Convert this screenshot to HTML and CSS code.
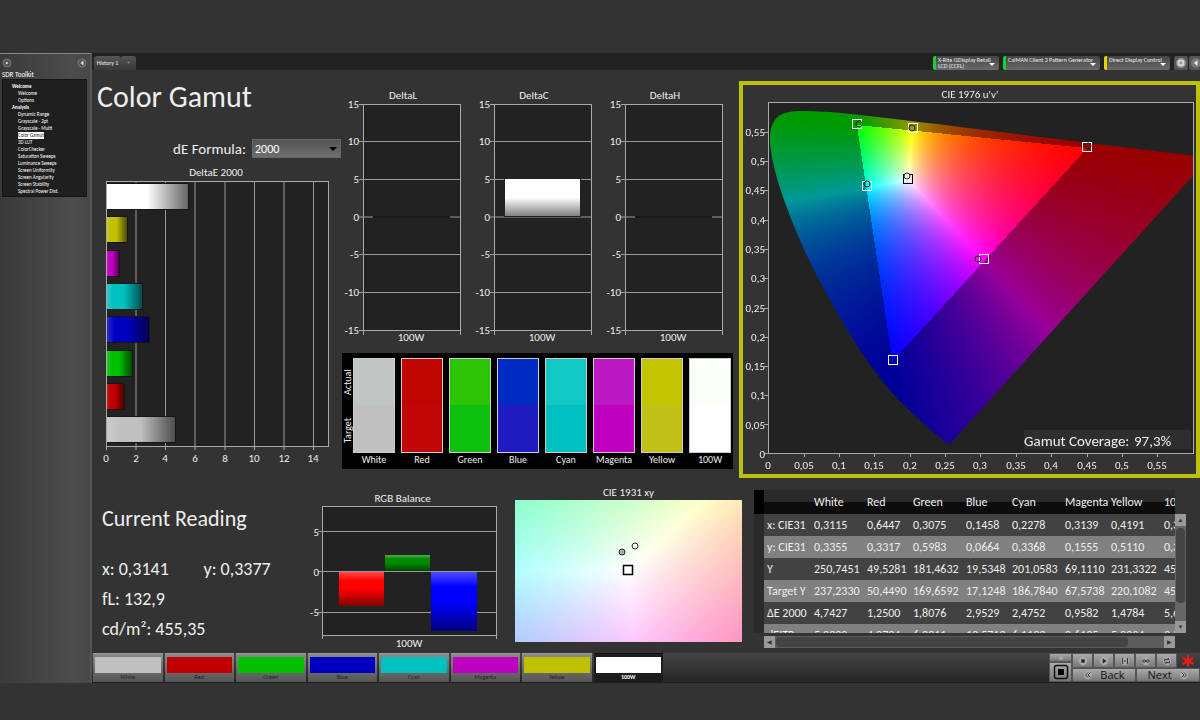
FILE: index.html
```html
<!DOCTYPE html>
<html lang="en">
<head>
    <meta charset="UTF-8">
    <meta name="viewport" content="width=device-width, initial-scale=1.0">
    <title>Color Gamut</title>
    <link rel="stylesheet" href="styles.css">
</head>
<body>
    <div class="app">
        <aside class="sidebar">
            <div class="sidebar-head">
                <button class="dot" aria-label="Menu"><svg viewBox="0 0 10 10"><circle cx="5" cy="5" r="4"/><path d="M4 3.500v3L6.500 5z"/></svg></button>
                <button class="dot" aria-label="Collapse"><svg viewBox="0 0 10 10"><circle cx="5" cy="5" r="4"/><path d="M6.500 2.500v5L3.500 5z"/></svg></button>
            </div>
            <p class="sidebar-title">SDR Toolkit</p>
            <nav class="tree">
                <b>Welcome</b>
                <a href="#">Welcome</a>
                <a href="#">Options</a>
                <b>Analysis</b>
                <a href="#">Dynamic Range</a>
                <a href="#">Grayscale - 2pt</a>
                <a href="#">Grayscale - Multi</a>
                <a href="#" class="current">Color Gamut</a>
                <a href="#">3D LUT</a>
                <a href="#">ColorChecker</a>
                <a href="#">Saturation Sweeps</a>
                <a href="#">Luminance Sweeps</a>
                <a href="#">Screen Uniformity</a>
                <a href="#">Screen Angularity</a>
                <a href="#">Screen Stability</a>
                <a href="#">Spectral Power Dist.</a>
            </nav>
        </aside>

        <main class="main">
            <header class="topbar">
                <div class="tabs">
                    <button class="tab">History 1</button>
                    <button class="tab add">+</button>
                </div>
                <div class="devices">
                    <button class="device meter"><span>X-Rite i1Display Retail<br>LCD (CCFL)</span></button>
                    <button class="device source"><span>CalMAN Client 3 Pattern Generator</span></button>
                    <button class="device display"><span>Direct Display Control</span></button>
                    <button class="round" aria-label="Settings"><svg viewBox="0 0 14 14"><circle cx="7" cy="7" r="5" fill="#999"/><circle cx="7" cy="7" r="2.500" fill="none" stroke="#ddd" stroke-width="1.500"/></svg></button>
                    <button class="round" aria-label="Hide"><svg viewBox="0 0 14 14"><circle cx="7" cy="7" r="5" fill="#777"/><path d="M8.500 4v6L5 7z" fill="#eee"/></svg></button>
                </div>
            </header>

            <div class="row upper">
                <section class="delta-e">
                    <h1>Color Gamut</h1>
                    <div class="formula">
                        <label for="formula">dE Formula:</label>
                        <select id="formula"><option>2000</option><option>1994</option><option>1976</option></select>
                    </div>
                    <figure>
                        <figcaption>DeltaE 2000</figcaption>
                        <svg viewBox="0 0 248 288" class="chart">
                            <defs>
                                <linearGradient id="shadeX">
                                    <stop offset="0" stop-color="#fff" stop-opacity=".2"/>
                                    <stop offset=".2" stop-color="#fff" stop-opacity="0"/>
                                    <stop offset=".5" stop-opacity="0"/>
                                    <stop offset="1" stop-opacity=".6"/>
                                </linearGradient>
                                <linearGradient id="shadeY" x2="0" y2="1">
                                    <stop offset="0" stop-color="#fff" stop-opacity=".3"/>
                                    <stop offset=".25" stop-color="#fff" stop-opacity="0"/>
                                    <stop offset=".5" stop-opacity="0"/>
                                    <stop offset="1" stop-opacity=".5"/>
                                </linearGradient>
                            </defs>
                            <rect class="plot" x="14.500" y="1.500" width="222" height="265"/>
                            <path class="grid" d="M44 1v265M73.500 1v265M103 1v265M133 1v265M162.500 1v265M192 1v265M221.500 1v265"/>
                            <g id="delta-e-bars"></g>
                            <path class="axis" d="M14.500 1v269M44 266v4M73.500 266v4M103 266v4M133 266v4M162.500 266v4M192 266v4M221.500 266v4"/>
                            <g class="mid">
                                <text x="14" y="282">0</text><text x="44" y="282">2</text><text x="73" y="282">4</text><text x="103" y="282">6</text>
                                <text x="133" y="282">8</text><text x="162" y="282">10</text><text x="192" y="282">12</text><text x="221" y="282">14</text>
                            </g>
                        </svg>
                    </figure>
                </section>

                <section class="deltas">
                    <div class="delta-row">
                        <figure>
                            <figcaption>DeltaL</figcaption>
                            <svg viewBox="0 0 131 242" class="chart">
                                <rect class="plot" x="23.500" y="1.500" width="97" height="226"/>
                                <path class="grid" d="M19 38.500h101M19 76.500h101M19 151.500h101M19 189.500h101M19 114h14M110 114h10"/>
                                <path class="axis" d="M19 1.500h4M19 227.500h4M23.500 227v5M120.500 227v5"/>
                                <path class="zero" d="M33 114h77"/>
                                <g class="end"><text x="19" y="5">15</text><text x="19" y="42">10</text><text x="19" y="80">5</text><text x="19" y="118">0</text><text x="19" y="155">-5</text><text x="19" y="193">-10</text><text x="19" y="231">-15</text></g>
                                <text class="mid" x="71" y="238">100W</text>
                            </svg>
                        </figure>
                        <figure>
                            <figcaption>DeltaC</figcaption>
                            <svg viewBox="0 0 131 242" class="chart">
                                <rect class="plot" x="23.500" y="1.500" width="97" height="226"/>
                                <path class="grid" d="M19 38.500h101M19 76.500h101M19 151.500h101M19 189.500h101M19 114h101"/>
                                <path class="axis" d="M19 1.500h4M19 227.500h4M23.500 227v5M120.500 227v5"/>
                                <rect x="33" y="76" width="77" height="38" fill="#222"/>
                                <rect x="34" y="76" width="75" height="37" fill="#fff"/>
                                <rect x="34" y="76" width="75" height="37" fill="url(#shadeY)"/>
                                <g class="end"><text x="19" y="5">15</text><text x="19" y="42">10</text><text x="19" y="80">5</text><text x="19" y="118">0</text><text x="19" y="155">-5</text><text x="19" y="193">-10</text><text x="19" y="231">-15</text></g>
                                <text class="mid" x="71" y="238">100W</text>
                            </svg>
                        </figure>
                        <figure>
                            <figcaption>DeltaH</figcaption>
                            <svg viewBox="0 0 131 242" class="chart">
                                <rect class="plot" x="23.500" y="1.500" width="97" height="226"/>
                                <path class="grid" d="M19 38.500h101M19 76.500h101M19 151.500h101M19 189.500h101M19 114h14M110 114h10"/>
                                <path class="axis" d="M19 1.500h4M19 227.500h4M23.500 227v5M120.500 227v5"/>
                                <path class="zero" d="M33 114h77"/>
                                <g class="end"><text x="19" y="5">15</text><text x="19" y="42">10</text><text x="19" y="80">5</text><text x="19" y="118">0</text><text x="19" y="155">-5</text><text x="19" y="193">-10</text><text x="19" y="231">-15</text></g>
                                <text class="mid" x="71" y="238">100W</text>
                            </svg>
                        </figure>
                    </div>

                    <div class="swatches">
                        <div class="side"><span>Actual</span><span>Target</span></div>
                        <div class="swatch white"><i></i>White</div>
                        <div class="swatch red"><i></i>Red</div>
                        <div class="swatch green"><i></i>Green</div>
                        <div class="swatch blue"><i></i>Blue</div>
                        <div class="swatch cyan"><i></i>Cyan</div>
                        <div class="swatch magenta"><i></i>Magenta</div>
                        <div class="swatch yellow"><i></i>Yellow</div>
                        <div class="swatch w100"><i></i>100W</div>
                    </div>
                </section>

                <section class="gamut">
                    <div class="gamut-frame">
                        <canvas id="uv" width="453" height="389"></canvas>
                        <svg viewBox="0 0 453 389" class="chart">
                            <text class="mid" x="227" y="13">CIE 1976 u'v'</text>
                            <rect class="axis" x="25.500" y="17.500" width="425" height="351"/>
                            <path class="axis" d="M21 47.500h4M21 76.500h4M21 105.500h4M21 135.500h4M21 164.500h4M21 193.500h4M21 223.500h4M21 252.500h4M21 281.500h4M21 310.500h4M21 339.500h4M21 368.500h4M61.500 368v4M96.500 368v4M131.500 368v4M167.500 368v4M202.500 368v4M237.500 368v4M273.500 368v4M308.500 368v4M344.500 368v4M379.500 368v4M414.500 368v4"/>
                            <g class="end">
                                <text x="22" y="51">0,55</text><text x="22" y="80">0,5</text><text x="22" y="109">0,45</text><text x="22" y="139">0,4</text>
                                <text x="22" y="168">0,35</text><text x="22" y="197">0,3</text><text x="22" y="227">0,25</text><text x="22" y="256">0,2</text>
                                <text x="22" y="285">0,15</text><text x="22" y="314">0,1</text><text x="22" y="344">0,05</text><text x="22" y="373">0</text>
                            </g>
                            <g class="mid">
                                <text x="25" y="384">0</text><text x="61" y="384">0,05</text><text x="96" y="384">0,1</text><text x="131" y="384">0,15</text>
                                <text x="167" y="384">0,2</text><text x="202" y="384">0,25</text><text x="237" y="384">0,3</text><text x="273" y="384">0,35</text>
                                <text x="308" y="384">0,4</text><text x="344" y="384">0,45</text><text x="379" y="384">0,5</text><text x="414" y="384">0,55</text>
                            </g>
                            <rect x="281" y="345" width="167" height="19" fill="#2e2e2e"/>
                            <text class="coverage" x="281" y="361">Gamut Coverage:</text>
                            <text class="coverage" x="391" y="361">97,3%</text>
                            <g class="target">
                                <rect x="109.500" y="34.500" width="9" height="9"/><rect x="165.500" y="38.500" width="9" height="9"/>
                                <rect x="339.500" y="57.500" width="9" height="9"/><rect x="119.500" y="96.500" width="9" height="9"/>
                                <rect x="236.500" y="169.500" width="9" height="9"/><rect x="145.500" y="270.500" width="9" height="9"/>
                                <rect x="160.500" y="89.500" width="9" height="9" stroke="#000"/>
                            </g>
                            <g class="actual">
                                <circle cx="116" cy="39" r="3"/><circle cx="169" cy="43" r="3"/><circle cx="345" cy="61" r="3"/>
                                <circle cx="124" cy="99" r="3"/><circle cx="164" cy="91" r="3" fill="#eee"/><circle cx="235" cy="174" r="3"/>
                            </g>
                        </svg>
                    </div>
                </section>
            </div>

            <div class="row lower">
                <section class="reading">
                    <h2>Current Reading</h2>
                    <p><span>x: 0,3141</span><span>y: 0,3377</span></p>
                    <p>fL: 132,9</p>
                    <p>cd/m²: 455,35</p>
                </section>

                <figure class="balance">
                    <figcaption>RGB Balance</figcaption>
                    <svg viewBox="0 0 200 146" class="chart">
                        <rect class="plot" x="17.500" y=".5" width="174" height="129"/>
                        <path class="grid" d="M13 25.500h178M13 65.500h178M13 106.500h178"/>
                        <path class="axis" d="M17.500 129v4M191.500 129v4"/>
                        <rect x="34" y="66" width="45" height="34" fill="#f00"/><rect x="34" y="66" width="45" height="34" fill="url(#shadeY)"/>
                        <rect x="80" y="49" width="45" height="16" fill="#008a00"/><rect x="80" y="49" width="45" height="16" fill="url(#shadeY)"/>
                        <rect x="126" y="66" width="46" height="59" fill="#00f"/><rect x="126" y="66" width="46" height="59" fill="url(#shadeY)"/>
                        <g class="end"><text x="14" y="30">5</text><text x="14" y="70">0</text><text x="14" y="110">-5</text></g>
                        <text class="mid" x="104" y="141">100W</text>
                    </svg>
                </figure>

                <figure class="cie">
                    <figcaption>CIE 1931 xy</figcaption>
                    <div class="cie-frame">
                        <canvas id="xy" width="227" height="142"></canvas>
                        <svg viewBox="0 0 227 142" class="chart">
                            <rect x="108.500" y="65.500" width="9" height="9" fill="#fff" stroke="#000" stroke-width="1.500"/>
                            <g class="actual"><circle cx="107" cy="52" r="3" fill="#aaa"/><circle cx="120" cy="46" r="3"/></g>
                        </svg>
                    </div>
                </figure>

                <section class="data">
                    <div class="strip"></div>
                    <div class="table-view">
                        <table>
                            <thead>
                                <tr><th class="name"></th><th>White</th><th class="s">Red</th><th>Green</th><th class="s">Blue</th><th>Cyan</th><th class="s">Magenta</th><th>Yellow</th><th>100W</th></tr>
                            </thead>
                            <tbody>
                                <tr><td>x: CIE31</td><td>0,3115</td><td>0,6447</td><td>0,3075</td><td>0,1458</td><td>0,2278</td><td>0,3139</td><td>0,4191</td><td>0,3141</td></tr>
                                <tr><td>y: CIE31</td><td>0,3355</td><td>0,3317</td><td>0,5983</td><td>0,0664</td><td>0,3368</td><td>0,1555</td><td>0,5110</td><td>0,3377</td></tr>
                                <tr><td>Y</td><td>250,7451</td><td>49,5281</td><td>181,4632</td><td>19,5348</td><td>201,0583</td><td>69,1110</td><td>231,3322</td><td>455,3500</td></tr>
                                <tr><td>Target Y</td><td>237,2330</td><td>50,4490</td><td>169,6592</td><td>17,1248</td><td>186,7840</td><td>67,5738</td><td>220,1082</td><td>455,3500</td></tr>
                                <tr><td>ΔE 2000</td><td>4,7427</td><td>1,2500</td><td>1,8076</td><td>2,9529</td><td>2,4752</td><td>0,9582</td><td>1,4784</td><td>5,6000</td></tr>
                                <tr><td>dEITP</td><td>5,2220</td><td>4,0734</td><td>6,2011</td><td>12,5712</td><td>6,1193</td><td>0,6135</td><td>5,2034</td><td>3,5000</td></tr>
                            </tbody>
                        </table>
                    </div>
                    <div class="vbar"><button aria-label="Up">▲</button><i></i><button aria-label="Down">▼</button></div>
                    <div class="hbar"><button aria-label="Left">◀</button><i></i><button aria-label="Right">▶</button></div>
                </section>
            </div>

            <footer class="footer">
                <div class="patterns">
                    <button class="pattern white"><i></i>White</button>
                    <button class="pattern red"><i></i>Red</button>
                    <button class="pattern green"><i></i>Green</button>
                    <button class="pattern blue"><i></i>Blue</button>
                    <button class="pattern cyan"><i></i>Cyan</button>
                    <button class="pattern magenta"><i></i>Magenta</button>
                    <button class="pattern yellow"><i></i>Yellow</button>
                    <button class="pattern w100 active"><i></i>100W</button>
                </div>
                <div class="controls">
                    <div class="stop-col">
                        <button aria-label="Record"><svg viewBox="0 0 12 12"><circle cx="6" cy="6" r="2.500" fill="#444"/></svg></button>
                        <button aria-label="Stop"><svg viewBox="0 0 16 16"><rect x="1.500" y="1.500" width="13" height="13" rx="2" fill="none" stroke="#111" stroke-width="1.500"/><rect x="5" y="5" width="6" height="6" fill="#000"/></svg></button>
                    </div>
                    <div class="nav-col">
                        <div class="icons">
                            <button aria-label="Stop reading"><svg viewBox="0 0 12 12"><circle cx="6" cy="6" r="5"/><path d="M4 4h4v4H4z"/></svg></button>
                            <button aria-label="Play"><svg viewBox="0 0 12 12"><circle cx="6" cy="6" r="5"/><path d="M4.500 3v6L9 6z"/></svg></button>
                            <button aria-label="Step"><svg viewBox="0 0 12 12"><circle cx="6" cy="6" r="5"/><path class="ln" d="M4 3H3v6h1M8 3h1v6H8M4.500 6h3"/></svg></button>
                            <button aria-label="Loop"><svg viewBox="0 0 12 12"><circle cx="6" cy="6" r="5"/><path class="ln" d="M6 6c-1-2-4-2-4 0s3 2 4 0 4-2 4 0-3 2-4 0z"/></svg></button>
                            <button aria-label="Refresh"><svg viewBox="0 0 12 12"><circle cx="6" cy="6" r="5"/><path class="ln" d="M3 6V4h5M9 6v2H4M7 2.500L8.500 4 7 5.500M5 6.500L3.500 8 5 9.500"/></svg></button>
                            <svg class="star" viewBox="0 0 14 14"><path d="M7 1v12M1.500 4l11 6M1.500 10l11-6"/></svg>
                        </div>
                        <div class="steps">
                            <button><svg viewBox="0 0 12 12"><circle cx="6" cy="6" r="5"/><path class="ln" d="M6 3L3 6l3 3M9 3L6 6l3 3"/></svg>Back</button>
                            <button>Next<svg viewBox="0 0 12 12"><circle cx="6" cy="6" r="5"/><path class="ln" d="M3 3l3 3-3 3M6 3l3 3-3 3"/></svg></button>
                        </div>
                    </div>
                </div>
            </footer>
        </main>
    </div>
    <script src="script.js"></script>
</body>
</html>
```

FILE: styles.css
```css
* { box-sizing: border-box; }
body {
    margin: 0;
    padding: 53px 0 37px;
    min-height: 100vh;
    background: #333;
    color: #eee;
    font-family: Carlito, Lato, sans-serif;
    font-size: 11px;
    overflow-x: hidden;
}
h1, h2, p, figure { margin: 0; font-weight: 400; }
button { margin: 0; padding: 0; border: none; font-family: inherit; color: inherit; cursor: pointer; }
svg { display: block; }
.app { display: flex; }

/* sidebar */
.sidebar {
    flex: none;
    width: 92px;
    padding: 4px 3px 0 2px;
    background: linear-gradient(90deg, #3a3a3a, #4c4c4c 80%, #484848);
    border-top: 1px solid #888;
    border-right: 2px solid #555;
}
.sidebar-head { display: flex; justify-content: space-between; height: 12px; }
.dot { width: 10px; height: 10px; background: none; }
.dot circle { fill: #555; stroke: #777; }
.dot path { fill: #ddd; }
.sidebar-title { font-size: 7px; line-height: 9px; color: #fff; }
.tree {
    display: flex;
    flex-direction: column;
    align-items: flex-start;
    height: 118px;
    padding: 3px 0 0 15px;
    background: #1f1f1f;
    border: 1px solid #161616;
    font-size: 5px;
    line-height: 7px;
}
.tree a { color: #fff; text-decoration: none; }
.tree b { margin-left: -6px; color: #fff; }
.tree .current { background: #fff; color: #222; }

/* top bar */
.main { flex: 1; min-width: 0; }
.topbar { display: flex; justify-content: space-between; height: 17px; padding: 3px 0 0 2px; background: #222; }
.tabs { display: flex; }
.tab { width: 27px; background: linear-gradient(#555, #383838); border-radius: 3px 3px 0 0; font-size: 6px; }
.tab.add { width: 15px; color: #999; }
.devices { display: flex; gap: 4px; }
.device {
    position: relative;
    display: flex;
    width: 66px;
    padding: 1px 0 0 2px;
    background: linear-gradient(#444, #6a6a6a);
    border-left: 3px solid #17d037;
    border-radius: 2px;
    font-size: 6px;
    line-height: 6px;
    text-align: left;
    white-space: nowrap;
}
.device::after {
    content: "";
    position: absolute;
    right: 4px;
    bottom: 4px;
    border: 3px solid transparent;
    border-top-color: #fff;
    border-bottom: none;
}
.device.source { width: 97px; }
.device.display { border-color: #e0d800; }
.round { width: 14px; height: 14px; margin-right: -3px; background: #555; border-radius: 2px; }

/* rows */
.row { display: grid; }
.row > * { min-width: 0; }
.upper { grid-template-columns: 248fr 399fr 461fr; min-height: 412px; }
.lower { grid-template-columns: 213fr 200fr 245fr 450fr; min-height: 171px; }

/* charts */
figcaption { line-height: 14px; text-align: center; }
.chart { width: 100%; height: auto; overflow: visible; font-size: 11px; fill: #eee; }
.plot { fill: #222; stroke: #aaa; }
.grid { fill: none; stroke: #999; }
.axis { fill: none; stroke: #aaa; }
.zero { stroke: #111; }
.mid { text-anchor: middle; }
.end { text-anchor: end; }
.target { fill: none; stroke: #fff; }
.actual { fill: none; stroke: #222; }
.coverage { font-size: 15px; }

.delta-e h1 { padding: 9px 0 0 5px; margin-bottom: 24px; font-size: 30px; line-height: 36px; }
.formula {
    position: relative;
    display: flex;
    justify-content: flex-end;
    align-items: center;
    gap: 6px;
    height: 19px;
    margin-bottom: 8px;
    font-size: 15px;
}
.formula select {
    width: 89px;
    height: 19px;
    margin-right: -1px;
    padding: 0 2px;
    appearance: none;
    border: 1px solid #666;
    border-radius: 0;
    background: linear-gradient(#555, #6e6e6e);
    color: #fff;
    font-family: inherit;
    font-size: 12px;
}
.formula::after {
    content: "";
    position: absolute;
    right: 3px;
    top: 8px;
    border: 4px solid transparent;
    border-top-color: #000;
    border-bottom: none;
}

.deltas { padding: 19px 6px 0 0; }
.delta-row { display: flex; }
.delta-row figure { flex: 1; }
.delta-row figcaption { padding-right: 5px; }

/* actual / target swatches */
.swatches { display: flex; gap: 6px; height: 116px; margin: 8px 0 0 2px; padding: 5px 2px 0 0; background: #000; }
.side { display: flex; flex-direction: column; width: 5px; font-size: 10px; }
.side span { height: 48px; line-height: 11px; text-align: center; writing-mode: vertical-rl; transform: rotate(180deg); }
.swatch { flex: 1; min-width: 0; display: flex; flex-direction: column; align-items: center; font-size: 10px; line-height: 14px; white-space: nowrap; }
.swatch i { width: 100%; height: 95px; border: 1px solid #ccc; background: linear-gradient(var(--actual) 50%, var(--target) 50%); }
.white { --actual: #c0c6c3; --target: #c0c0c0; }
.red { --actual: #be0500; --target: #c00808; }
.green { --actual: #2cc404; --target: #0dc00d; }
.blue { --actual: #002cc4; --target: #211cc0; }
.cyan { --actual: #12c8c4; --target: #00c0c0; }
.magenta { --actual: #bc18c4; --target: #c000c0; }
.yellow { --actual: #c4c400; --target: #c0c018; }
.w100 { --actual: #fafff8; --target: #fff; }

/* gamut */
.gamut { padding-top: 11px; }
.gamut-frame { position: relative; border: 4px solid #bcc008; }
.gamut-frame canvas, .cie-frame canvas { display: block; width: 100%; height: auto; }
.gamut-frame svg, .cie-frame svg { position: absolute; top: 0; left: 0; }

/* lower row */
.reading { padding: 23px 0 0 10px; font-size: 18px; line-height: 30px; white-space: nowrap; }
.reading h2 { margin-bottom: 21px; font-size: 22px; line-height: 28px; }
.reading p { display: flex; }
.reading span { width: 104px; }
.balance { padding-top: 10px; }
.balance figcaption { padding-right: 5px; }
.cie { padding: 4px 8px 0 10px; }
.cie-frame { position: relative; }

.data {
    display: grid;
    grid-template-columns: 10px 1fr 11px;
    grid-template-rows: 143px 12px;
    row-gap: 3px;
    align-content: start;
    padding: 8px 14px 0 4px;
}
.strip { background: linear-gradient(#000 24px, #2a2a2a 24px); }
.table-view { overflow: hidden; }
table { width: 445px; table-layout: fixed; border-collapse: collapse; font-size: 12px; }
th, td { height: 22px; padding: 0 0 0 3px; font-weight: 400; text-align: left; white-space: nowrap; }
th { width: 53px; height: 24px; }
th.name { width: 47px; }
th.s { width: 46px; }
thead tr { background: linear-gradient(#2a2a2a 50%, #0c0c0c 50%); }
tbody tr { background: #424242; }
tbody tr:nth-child(even) { background: #808080; }
.vbar { display: flex; flex-direction: column; margin-top: 24px; background: #666; }
.hbar { display: flex; grid-column: 2; background: #5c5c5c; }
.vbar button, .hbar button { width: 11px; height: 12px; background: #999; color: #333; font-size: 6px; line-height: 12px; }
.vbar i { height: 75px; margin: 2px 1px auto; background: #444; border-radius: 4px; }
.hbar i { flex: 1; margin: 1px 36px 1px 1px; background: #444; border-radius: 4px; }

/* footer */
.footer { display: flex; justify-content: space-between; height: 30px; padding-left: 1px; background: linear-gradient(#444, #262626); border-bottom: 1px solid #1c1c1c; }
.patterns { display: flex; gap: 2px; width: 570px; }
.pattern {
    flex: 1;
    display: flex;
    flex-direction: column;
    align-items: center;
    padding: 3px 2px 0;
    border-top: 1px solid #999;
    background: linear-gradient(#8a8a8a, #555);
    color: #222;
    font-size: 6px;
    line-height: 9px;
}
.pattern i { width: 100%; height: 16px; background: var(--target); }
.pattern.red i { background: #c00000; }
.pattern.green i { background: #00c000; }
.pattern.blue i { background: #0000c0; }
.pattern.yellow i { background: #c0c000; }
.pattern.active { border-color: #111; background: #1c1c1c; color: #fff; font-weight: 700; }
.controls { display: flex; width: 151px; color: #111; }
.controls button { display: flex; align-items: center; justify-content: center; background: linear-gradient(#aaa, #777); border: 1px solid #555; }
.controls svg { width: 10px; height: 10px; }
.controls circle { fill: #aaa; }
.controls path { fill: #222; }
.controls path.ln { fill: none; stroke: #222; }
.stop-col { display: flex; flex-direction: column; width: 23px; }
.stop-col button:first-child { height: 9px; }
.stop-col button:last-child { flex: 1; }
.stop-col button:last-child svg { width: 16px; height: 16px; }
.nav-col { flex: 1; }
.icons { display: flex; align-items: center; height: 15px; }
.icons button { width: 21px; height: 15px; }
.icons .star { width: 14px; height: 14px; margin-left: 4px; }
.icons .star path { stroke: #f01818; stroke-width: 2; }
.steps { display: flex; font-family: "Open Sans", "DejaVu Sans", sans-serif; }
.steps button { flex: 1; height: 14px; gap: 7px; font-family: inherit; font-size: 11px; line-height: 12px; }
```

FILE: script.js
```js
// Delta E bars, top to bottom
const bars = [
    ['#ffffff', 5.6], ['#c0c000', 1.4784], ['#c000c0', 0.9582], ['#00c0c0', 2.4752],
    ['#0000c0', 2.9529], ['#00c000', 1.8076], ['#c00000', 1.25], ['#c0c0c0', 4.7427]
];
let barMarkup = '';
bars.forEach(([color, value], i) => {
    const y = Math.round(4 + i * 33.3);
    const w = Math.round(value * 14.8);
    barMarkup += `<rect x="14" y="${y - 1}" width="${w}" height="27" fill="#151515"/>`;
    barMarkup += `<rect x="14" y="${y}" width="${w - 1}" height="25" fill="${color}"/>`;
    barMarkup += `<rect x="14" y="${y}" width="${w - 1}" height="25" fill="url(#shadeX)"/>`;
});
document.getElementById('delta-e-bars').innerHTML = barMarkup;

// Linear sRGB for a chromaticity, scaled so the largest channel is 1
function chromaToRgb(x, y) {
    const X = x / y;
    const Z = (1 - x - y) / y;
    const rgb = [
        3.2406 * X - 1.5372 - 0.4986 * Z,
        -0.9689 * X + 1.8758 + 0.0415 * Z,
        0.0557 * X - 0.2040 + 1.0570 * Z
    ];
    const inside = Math.min(...rgb) >= 0;
    const max = Math.max(...rgb);
    return { inside, rgb: rgb.map(c => Math.max(0, c) / max) };
}

// Spectral locus, CIE 1931 x y
const locus = [
    [.1741, .0050], [.1714, .0051], [.1644, .0109], [.1566, .0177], [.1440, .0297], [.1355, .0399],
    [.1241, .0578], [.1096, .0868], [.0913, .1327], [.0687, .2007], [.0454, .2950], [.0235, .4127],
    [.0082, .5384], [.0039, .6548], [.0139, .7502], [.0389, .8120], [.0743, .8338], [.1142, .8262],
    [.1547, .8059], [.2296, .7543], [.3016, .6923], [.3731, .6245], [.4441, .5547], [.5125, .4866],
    [.5752, .4242], [.6270, .3725], [.6658, .3340], [.6915, .3083], [.7190, .2809], [.7347, .2653]
];

function drawUv() {
    const canvas = document.getElementById('uv');
    const ctx = canvas.getContext('2d');
    const left = 25.5, bottom = 368.5, sx = 707, sy = 584;

    const field = document.createElement('canvas');
    field.width = canvas.width;
    field.height = canvas.height;
    const fctx = field.getContext('2d');
    const img = fctx.createImageData(field.width, field.height);
    for (let py = 0; py < field.height; py++) {
        for (let px = 0; px < field.width; px++) {
            const u = (px + 0.5 - left) / sx;
            const v = Math.max(0.001, (bottom - py - 0.5) / sy);
            const d = 6 * u - 16 * v + 12;
            const { inside, rgb } = chromaToRgb(9 * u / d, 4 * v / d);
            const k = inside ? 255 : 153;
            const i = (py * field.width + px) * 4;
            rgb.forEach((c, n) => { img.data[i + n] = c * k; });
            img.data[i + 3] = 255;
        }
    }
    fctx.putImageData(img, 0, 0);

    ctx.fillStyle = '#333';
    ctx.fillRect(0, 0, canvas.width, canvas.height);
    ctx.fillStyle = '#222';
    ctx.fillRect(25, 17, 426, 352);

    const pts = locus.map(([x, y]) => {
        const d = -2 * x + 12 * y + 3;
        return [left + 4 * x / d * sx, bottom - 9 * y / d * sy];
    });
    ctx.save();
    ctx.beginPath();
    ctx.rect(26, 18, 424, 350);
    ctx.clip();
    ctx.beginPath();
    ctx.moveTo(...pts[0]);
    for (let i = 1; i < pts.length - 1; i++) {
        const [x, y] = pts[i];
        const [nx, ny] = pts[i + 1];
        ctx.quadraticCurveTo(x, y, (x + nx) / 2, (y + ny) / 2);
    }
    ctx.lineTo(...pts[pts.length - 1]);
    ctx.closePath();
    ctx.clip();
    ctx.drawImage(field, 0, 0);
    ctx.restore();
}

function drawXy() {
    const canvas = document.getElementById('xy');
    const ctx = canvas.getContext('2d');
    const img = ctx.createImageData(canvas.width, canvas.height);
    for (let py = 0; py < canvas.height; py++) {
        for (let px = 0; px < canvas.width; px++) {
            const { rgb } = chromaToRgb(0.3127 + (px - 113) / 5000, 0.329 - (py - 70) / 2770);
            const i = (py * canvas.width + px) * 4;
            rgb.forEach((c, n) => { img.data[i + n] = c * 255; });
            img.data[i + 3] = 255;
        }
    }
    ctx.putImageData(img, 0, 0);
}

drawUv();
drawXy();
```
